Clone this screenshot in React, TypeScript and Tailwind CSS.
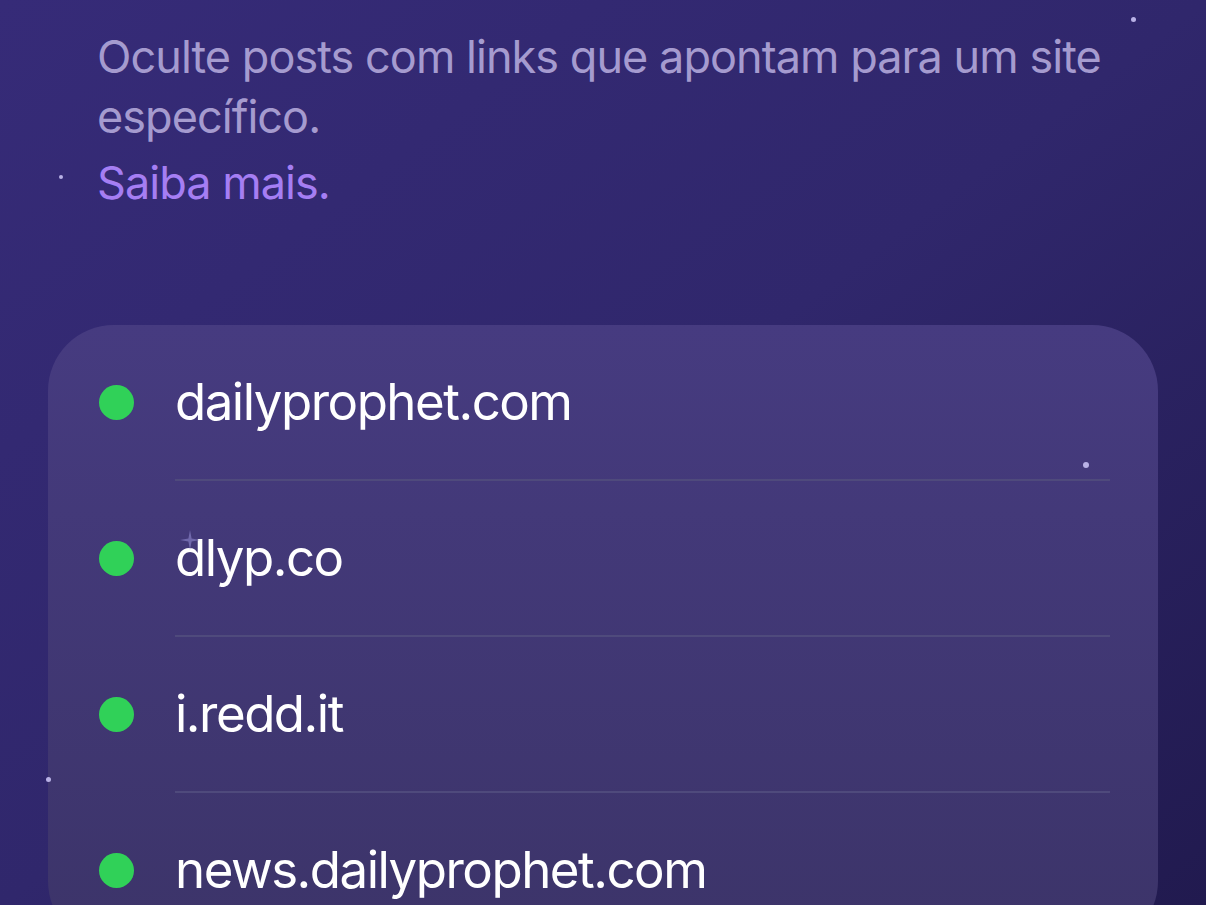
const SITES = ['dailyprophet.com', 'dlyp.co', 'i.redd.it', 'news.dailyprophet.com'];

// little star dots sprinkled over the background
const STARS = [
  { x: 1131, y: 17, s: 5 },
  { x: 59, y: 175, s: 4 },
  { x: 1083, y: 462, s: 6 },
  { x: 46, y: 777, s: 5 },
];

function Sparkle() {
  return (
    <svg className="absolute left-[180px] top-[530px] w-[20px] h-[20px]" viewBox="0 0 20 20">
      <path d="M10 0 L11.6 8.4 L20 10 L11.6 11.6 L10 20 L8.4 11.6 L0 10 L8.4 8.4 Z" fill="#7c74b8" opacity="0.8" />
    </svg>
  );
}

export default function App() {
  return (
    <div
      className="relative w-full h-[905px] overflow-hidden bg-gradient-to-br from-[#362b78] via-[#30276c] to-[#211a4f]"
      style={{ fontFamily: 'Inter, "Noto Sans", sans-serif' }}
    >
      {/* Description */}
      <div className="px-[97px] pt-[27px]">
        <p className="text-[45px] leading-[60px] text-[#a59bcf] tracking-[-0.95px]">
          Oculte posts com links que apontam para um site específico.
        </p>
        <p className="mt-[6px] text-[45px] leading-[60px] text-[#a57ef3] tracking-[-0.95px]">Saiba mais.</p>
      </div>

      {/* Site list */}
      <div className="mx-[48px] mt-[112px] rounded-[66px] bg-gradient-to-b from-[#463b80] to-[#3c3469] pl-[51px] pr-[48px]">
        {SITES.map((site, i) => (
          <div key={site}>
            <div className="flex items-center h-[154px]">
              <span className="w-[35px] h-[35px] rounded-full bg-[#30d158] flex-shrink-0" />
              <span className="ml-[41px] text-[51px] text-white tracking-[-1.5px]">{site}</span>
            </div>
            {i < SITES.length - 1 && <div className="ml-[76px] h-[2px] bg-[#4f4a7c]" />}
          </div>
        ))}
      </div>

      {STARS.map((st, i) => (
        <span
          key={i}
          className="absolute rounded-full bg-[#b9b2e6]"
          style={{ left: st.x, top: st.y, width: st.s, height: st.s }}
        />
      ))}
      <Sparkle />
    </div>
  );
}
